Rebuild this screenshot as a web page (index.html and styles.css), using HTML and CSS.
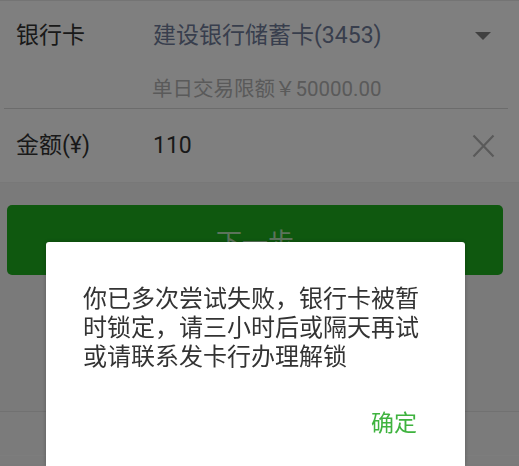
FILE: index.html
```html
<!DOCTYPE html>
<html lang="zh-CN">
<head>
<meta charset="utf-8">
<title>银行卡转账</title>
<link rel="stylesheet" href="styles.css">
</head>
<body>
<main class="page">
  <section class="card">
    <div class="bank">
      <div class="field">
        <span class="label">银行卡</span>
        <span class="value bank-name">建设银行储蓄卡(3453)</span>
        <span class="icon">
          <svg width="16" height="8" viewBox="0 0 16 8"><path d="M0 0H16L8 8Z" fill="#808080"/></svg>
        </span>
      </div>
      <div class="hint">单日交易限额￥50000.00</div>
    </div>
    <div class="divider"></div>
    <div class="field amount">
      <span class="label">金额(¥)</span>
      <span class="value">110</span>
      <span class="icon">
        <svg width="23" height="24" viewBox="0 0 23 24"><path d="M1.5 1.5L21.5 22.5M21.5 1.5L1.5 22.5" stroke="#b4b4b4" stroke-width="2.2" fill="none"/></svg>
      </span>
    </div>
  </section>

  <button class="next" type="button">下一步</button>

  <ul class="links">
    <li></li>
    <li></li>
  </ul>
</main>

<div class="mask"></div>

<div class="dialog" role="alertdialog">
  <p class="dialog-text">你已多次尝试失败，银行卡被暂时锁定，请三小时后或隔天再试或请联系发卡行办理解锁</p>
  <div class="dialog-actions">
    <button class="dialog-ok" type="button">确定</button>
  </div>
</div>
</body>
</html>
```

FILE: styles.css
```css
html, body {
  margin: 0;
  padding: 0;
}

body {
  width: 519px;
  height: 466px;
  overflow: hidden;
  background: #f4f4f4;
  font-family: "Roboto", "Noto Sans CJK SC", sans-serif;
  color: #333;
}

.page {
  display: flex;
  flex-direction: column;
}

/* form card */
.card {
  background: #fff;
  border-top: 1px solid #e8e8e8;
  border-bottom: 1px solid #f0f0f0;
}

.bank {
  padding: 20px 0 7px;
}

.field {
  display: flex;
  align-items: center;
  padding-left: 16px;
  font-size: 23px;
  line-height: 30px;
}

.label {
  width: 137px;
  flex: none;
  color: #333;
}

.value {
  flex: 1;
  color: #333;
}

.bank-name {
  color: #717d9a;
}

.icon {
  flex: none;
  width: 24px;
  margin-right: 24px;
  display: flex;
  justify-content: center;
  align-items: center;
}

.hint {
  margin-top: 26px;
  padding-left: 152px;
  font-size: 20.5px;
  line-height: 24px;
  color: #b4b4b4;
}

.divider {
  height: 1px;
  margin: 0 11px 0 4px;
  background: #d8d8d8;
}

.amount {
  height: 73px;
}

/* primary action */
.next {
  margin: 22px 16px 0 7px;
  height: 70px;
  border: none;
  border-radius: 5px;
  background: #1eb01f;
  color: rgba(255, 255, 255, 0.7);
  font-family: "Noto Sans CJK SC", sans-serif;
  font-size: 26px;
  padding: 0;
}

.links {
  list-style: none;
  margin: 136px 0 0;
  padding: 0;
}

.links li {
  height: 43px;
  border-top: 1px solid #e2e2e2;
  background: #f6f6f6;
}

.links li + li {
  height: 8px;
  border-top-color: #fafafa;
}

/* modal */
.mask {
  position: fixed;
  inset: 0;
  background: rgba(0, 0, 0, 0.5);
}

.dialog {
  position: fixed;
  left: 46px;
  top: 242px;
  bottom: 0;
  width: 419px;
  background: #fff;
  border-radius: 3px 3px 0 0;
  box-shadow: 0 0 4px rgba(0, 0, 0, 0.25);
  box-sizing: border-box;
  padding: 40px 37px 0;
}

.dialog-text {
  margin: 0;
  font-family: "Noto Sans CJK SC", sans-serif;
  font-size: 24px;
  line-height: 29px;
  color: #333;
}

.dialog-actions {
  display: flex;
  justify-content: flex-end;
  margin-top: 37px;
  margin-right: 11px;
}

.dialog-ok {
  border: none;
  background: none;
  padding: 0;
  font-family: "Noto Sans CJK SC", sans-serif;
  font-size: 23px;
  line-height: 30px;
  color: #3fb33f;
}
```
